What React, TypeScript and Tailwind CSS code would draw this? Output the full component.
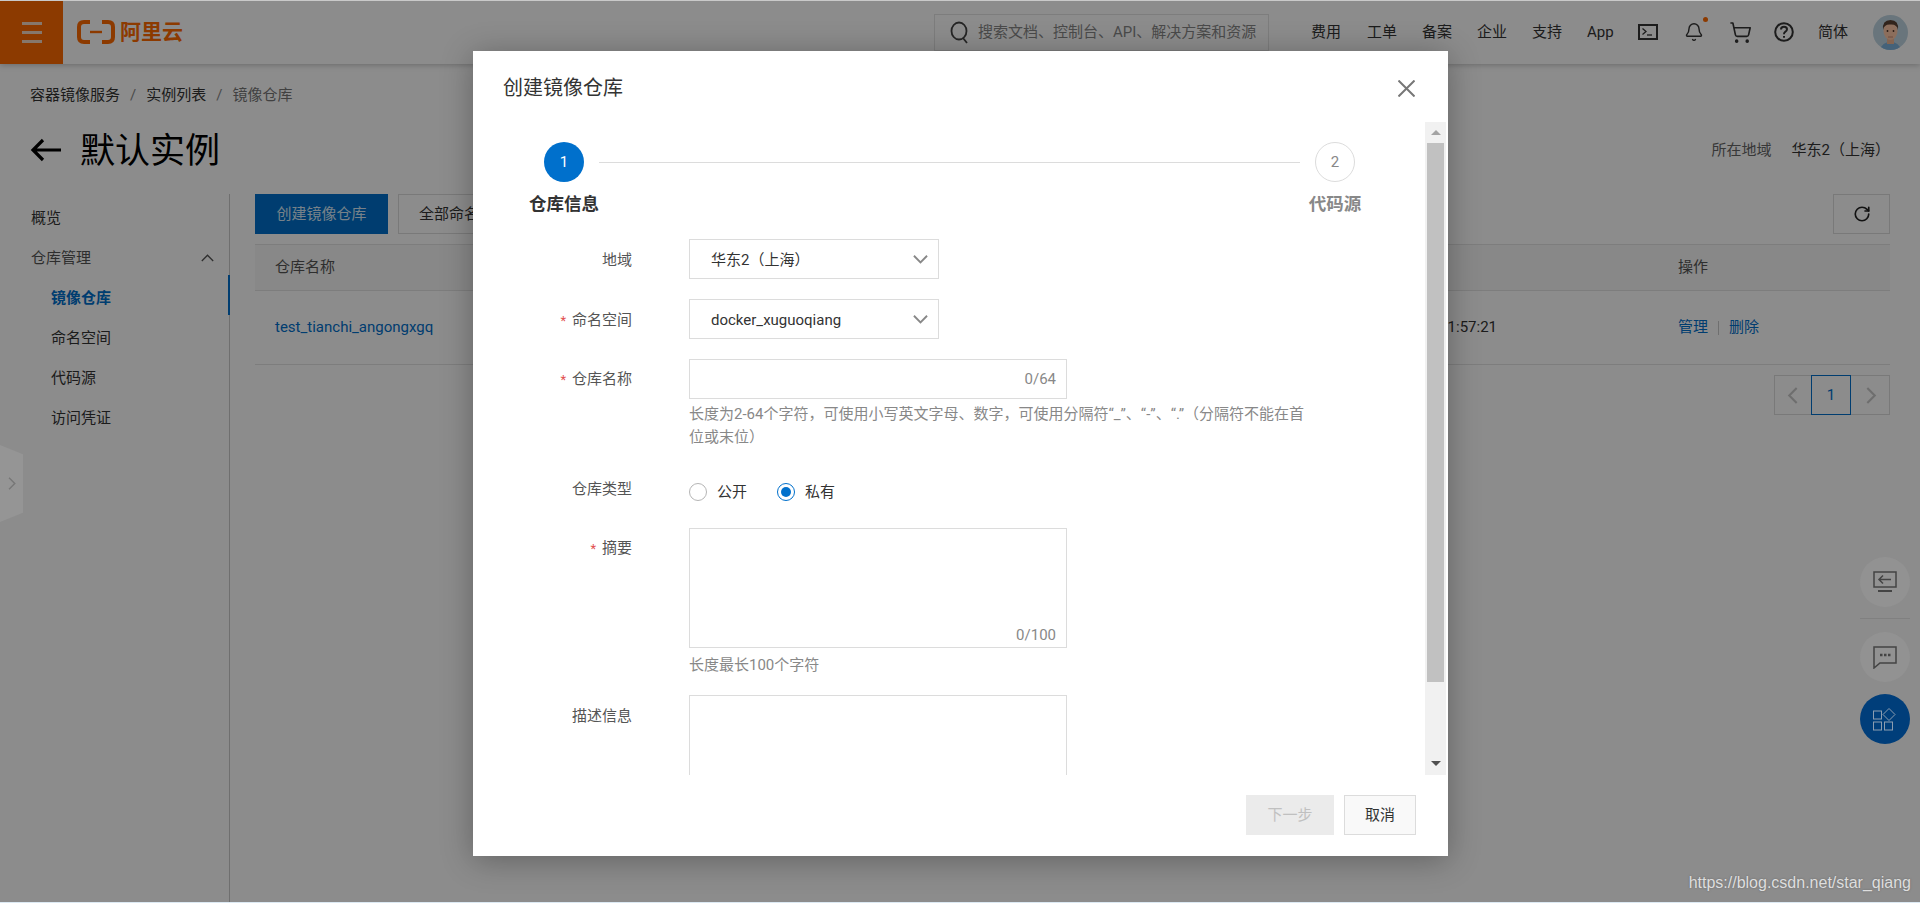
import React from "react";
import { Bell, ShoppingCart, RotateCw } from "lucide-react";

function Chevron({ dir = "down", size = 15, color = "#888", sw = 2 }: { dir?: string; size?: number; color?: string; sw?: number }) {
  const d: Record<string, string> = {
    down: "M1 4 L8 11 L15 4",
    up: "M1 11 L8 4 L15 11",
    left: "M11 1 L4 8 L11 15",
    right: "M5 1 L12 8 L5 15",
  };
  return (
    <svg width={size} height={size} viewBox="0 0 16 16" fill="none" stroke={color} strokeWidth={sw}>
      <path d={d[dir]} />
    </svg>
  );
}

function Label({ text, required, leading }: { text: string; required?: boolean; leading: string }) {
  return (
    <div className={`h-10 w-[159px] shrink-0 text-right text-[15px] text-[#555] ${leading}`}>
      {required && <span className="mr-[6px] text-[13px] text-[#e2504e]">*</span>}
      {text}
    </div>
  );
}

function Select({ value }: { value: string }) {
  return (
    <div className="flex h-10 w-[250px] items-center justify-between border border-[#dcdcdc] bg-white pl-[21px] pr-[10px] text-[15px] text-[#333]">
      <span className="pt-[2px]">{value}</span>
      <Chevron />
    </div>
  );
}

function Header() {
  return (
    <div className="flex h-16 shrink-0 items-center bg-white text-[15px] text-[#333] shadow-[0_1px_6px_rgba(0,0,0,0.25)]">
      <div className="flex h-16 w-[63px] shrink-0 flex-col items-center justify-center gap-[6px] bg-[#ff6a00]">
        <div className="h-[3px] w-5 bg-[#f4d9c4]" />
        <div className="h-[3px] w-5 bg-[#f4d9c4]" />
        <div className="h-[3px] w-5 bg-[#f4d9c4]" />
      </div>
      <div className="ml-[14px] flex items-center gap-[5px] text-[#ff6a00]">
        <svg width="38" height="24" viewBox="0 0 38 24" fill="none" stroke="#ff6a00">
          <path d="M13 2 H7 Q2 2 2 7 V17 Q2 22 7 22 H13" strokeWidth="4" />
          <path d="M25 2 H31 Q36 2 36 7 V17 Q36 22 31 22 H25" strokeWidth="4" />
          <path d="M13 12 H25" strokeWidth="2.4" />
        </svg>
        <span className="text-[21px] font-bold leading-none">阿里云</span>
      </div>
      <div className="ml-auto flex h-[37px] w-[335px] items-center overflow-hidden border border-[#e3e3e3] bg-white pl-[15px] whitespace-nowrap text-[#888]">
        <svg width="20" height="24" viewBox="0 0 20 24" fill="none" stroke="#444" strokeWidth="1.8" className="mr-[8px] shrink-0">
          <ellipse cx="9" cy="11" rx="7.5" ry="8.5" />
          <path d="M13 18 L17 23" />
        </svg>
        搜索文档、控制台、API、解决方案和资源
      </div>
      <div className="ml-[42px] flex items-center">
        <span className="w-[31px] whitespace-nowrap">费用</span>
        <span className="ml-[25px] w-[31px] whitespace-nowrap">工单</span>
        <span className="ml-[24px] w-[31px] whitespace-nowrap">备案</span>
        <span className="ml-[24px] w-[31px] whitespace-nowrap">企业</span>
        <span className="ml-[24px] w-[31px] whitespace-nowrap">支持</span>
        <span className="ml-[24px] w-[28px] whitespace-nowrap">App</span>
        <svg width="20" height="16" viewBox="0 0 20 16" fill="none" stroke="#333" className="ml-[23px]">
          <rect x="1" y="1" width="18" height="14" strokeWidth="2" />
          <path d="M4.5 4.5 L8 7.5 L4.5 10.5" strokeWidth="1.3" />
          <path d="M9 11 H14" strokeWidth="1.3" />
        </svg>
        <div className="relative ml-[26px]">
          <Bell size={20} color="#333" strokeWidth={1.7} />
          <div className="absolute -right-[4px] -top-[5px] h-[5px] w-[5px] rounded-full bg-[#ff6a00]" />
        </div>
        <ShoppingCart size={23} color="#333" strokeWidth={1.7} className="ml-[25px]" />
        <svg width="20" height="20" viewBox="0 0 20 20" fill="none" stroke="#333" strokeWidth="2" className="ml-[22px]">
          <circle cx="10" cy="10" r="8.8" />
          <path d="M7 7.5 Q7 4.8 10 4.8 Q13 4.8 13 7.3 Q13 9 11 10 Q10 10.6 10 12.2" />
          <path d="M10 14 V15.8" />
        </svg>
        <span className="ml-[24px] w-[31px] whitespace-nowrap">简体</span>
        <svg width="35" height="35" viewBox="0 0 35 35" className="ml-[24px] mr-[12px] rounded-full">
          <rect width="35" height="35" fill="#c0d6e2" />
          <path d="M7 35 Q9 27 17.5 27 Q26 27 28 35 Z" fill="#7fb2dc" />
          <rect x="14" y="22" width="7" height="7" fill="#f0b896" />
          <ellipse cx="17.5" cy="16" rx="7" ry="9" fill="#ffc9a8" />
          <path d="M10 15 Q9 5 17.5 5 Q26 5 25 15 Q24 9 17.5 9.5 Q11 9 10 15 Z" fill="#5a4234" />
          <circle cx="14.5" cy="16" r="0.9" fill="#4a3226" />
          <circle cx="20.5" cy="16" r="0.9" fill="#4a3226" />
          <path d="M15 22 H20" stroke="#b97a62" strokeWidth="0.8" />
        </svg>
      </div>
    </div>
  );
}

function Sidebar() {
  const sub = ["命名空间", "代码源", "访问凭证"];
  return (
    <div className="h-full w-[230px] shrink-0 border-r border-[#cacaca] pt-[4px] text-[15px]">
      <div className="flex h-10 items-center pl-[31px] text-[#333]">概览</div>
      <div className="flex h-10 items-center justify-between pl-[31px] pr-[15px] text-[#555]">
        <span>仓库管理</span>
        <Chevron dir="up" size={13} color="#555" sw={1.6} />
      </div>
      <div className="relative flex h-10 items-center pl-[51px] font-bold text-[#0070cc]">
        镜像仓库
        <div className="absolute -right-px -top-[3px] h-10 w-[2px] bg-[#0070cc]" />
      </div>
      {sub.map((s) => (
        <div key={s} className="flex h-10 items-center pl-[51px] text-[#333]">{s}</div>
      ))}
    </div>
  );
}

function Content() {
  return (
    <div className="ml-[25px] w-[1635px] text-[15px]">
      <div className="flex h-10 justify-between">
        <div className="flex gap-[10px]">
          <div className="flex h-10 w-[133px] items-center justify-center bg-[#0070cc] text-[#d9ecfa]">创建镜像仓库</div>
          <div className="flex h-10 w-[170px] items-center border border-[#dcdcdc] pl-[20px] text-[#333]">全部命名空间</div>
        </div>
        <div className="flex h-10 w-[57px] items-center justify-center border border-[#dcdcdc]">
          <RotateCw size={18} color="#222" strokeWidth={2.2} />
        </div>
      </div>
      <div className="mt-[10px] flex h-[47px] items-center border-y border-[#e3e3e3] bg-[#f7f7f7] text-[#555]">
        <span className="flex-1 pl-[20px]">仓库名称</span>
        <span className="w-[212px]">操作</span>
      </div>
      <div className="flex h-[74px] items-center border-b border-[#e3e3e3] text-[#333]">
        <span className="flex-1 pl-[20px] text-[#0070cc]">test_tianchi_angongxgq</span>
        <span className="mr-[181px]">2020-03-21 21:57:21</span>
        <div className="flex w-[212px] items-center text-[#0070cc]">
          <span>管理</span>
          <div className="mx-[10px] h-[14px] w-px bg-[#cacaca]" />
          <span>删除</span>
        </div>
      </div>
      <div className="mt-[10px] flex justify-end">
        <div className="flex h-10 w-[116px] border border-[#dcdcdc]">
          <div className="flex w-[36px] items-center justify-center"><Chevron dir="left" size={17} color="#c9c9c9" /></div>
          <div className="-my-px flex w-10 items-center justify-center border border-[#0070cc] text-[#0070cc]">1</div>
          <div className="flex flex-1 items-center justify-center"><Chevron dir="right" size={17} color="#c9c9c9" /></div>
        </div>
      </div>
    </div>
  );
}

function Modal() {
  return (
    <div className="absolute left-[473px] top-[51px] z-20 flex h-[805px] w-[975px] flex-col bg-white text-[15px] shadow-[0_4px_30px_rgba(0,0,0,0.3)]">
      <div className="flex h-[71px] shrink-0 items-center justify-between pl-[30px] pr-[33px] pt-[3px]">
        <span className="text-[20px] text-[#333]">创建镜像仓库</span>
        <svg width="17" height="17" viewBox="0 0 17 17" stroke="#777" strokeWidth="2" fill="none">
          <path d="M0.5 0.5 L16.5 16.5 M16.5 0.5 L0.5 16.5" />
        </svg>
      </div>
      <div className="flex h-[653px] shrink-0 overflow-hidden">
        <div className="flex-1 pt-[20px]">
          <div className="ml-[56px] flex w-[841px]">
            <div className="flex w-[70px] flex-col items-center">
              <div className="flex h-10 w-10 items-center justify-center rounded-full bg-[#0070cc] text-white">1</div>
              <div className="mt-[10px] whitespace-nowrap text-[17.5px] font-bold leading-[24px] text-[#333]">仓库信息</div>
            </div>
            <div className="mt-[20px] h-px flex-1 bg-[#dcdcdc]" />
            <div className="flex w-[70px] flex-col items-center">
              <div className="flex h-10 w-10 items-center justify-center rounded-full border border-[#dcdcdc] text-[#888]">2</div>
              <div className="mt-[10px] whitespace-nowrap text-[17.5px] font-bold leading-[24px] text-[#888]">代码源</div>
            </div>
          </div>
          <div className="mt-[23px] flex flex-col">
            <div className="flex gap-[57px]">
              <Label text="地域" leading="leading-[42px]" />
              <Select value="华东2（上海）" />
            </div>
            <div className="mt-[20px] flex gap-[57px]">
              <Label text="命名空间" required leading="leading-[42px]" />
              <Select value="docker_xuguoqiang" />
            </div>
            <div className="mt-[20px] flex gap-[57px]">
              <Label text="仓库名称" required leading="leading-[40px]" />
              <div>
                <div className="flex h-10 w-[378px] items-center justify-end border border-[#dcdcdc] pr-[10px] text-[#888]">0/64</div>
                <div className="mt-[4px] w-[640px] text-[15px] leading-[22.5px] text-[#888]">
                  长度为2-64个字符，可使用小写英文字母、数字，可使用分隔符“_”、“-”、“.”（分隔符不能在首
                  <br />
                  位或末位）
                </div>
              </div>
            </div>
            <div className="mt-[24px] flex gap-[57px]">
              <Label text="仓库类型" leading="leading-[34px]" />
              <div className="flex h-10 items-center text-[#333]">
                <div className="h-[18px] w-[18px] rounded-full border border-[#b5b5b5]" />
                <span className="ml-[10px]">公开</span>
                <div className="ml-[30px] flex h-[18px] w-[18px] items-center justify-center rounded-full border border-[#0070cc]">
                  <div className="h-[10px] w-[10px] rounded-full bg-[#0070cc]" />
                </div>
                <span className="ml-[10px]">私有</span>
              </div>
            </div>
            <div className="mt-[16px] flex gap-[57px]">
              <Label text="摘要" required leading="leading-[40px]" />
              <div>
                <div className="flex h-[120px] w-[378px] items-end justify-end border border-[#dcdcdc] pb-[1px] pr-[10px] text-[#888]">0/100</div>
                <div className="mt-[6px] leading-[22.5px] text-[#888]">长度最长100个字符</div>
              </div>
            </div>
            <div className="mt-[18px] flex gap-[57px]">
              <Label text="描述信息" leading="leading-[42px]" />
              <div className="h-[120px] w-[378px] border border-[#dcdcdc]" />
            </div>
          </div>
        </div>
        <div className="mr-[2px] flex w-[21px] shrink-0 flex-col items-center bg-[#f1f1f1]">
          <div className="flex h-[21px] w-full items-center justify-center">
            <div className="h-0 w-0 border-x-[5px] border-b-[5px] border-x-transparent border-b-[#a3a3a3]" />
          </div>
          <div className="h-[539px] w-[17px] bg-[#c1c1c1]" />
          <div className="mt-auto flex h-[24px] w-full items-center justify-center">
            <div className="h-0 w-0 border-x-[5px] border-t-[5px] border-x-transparent border-t-[#505050]" />
          </div>
        </div>
      </div>
      <div className="flex flex-1 items-start justify-end gap-[10px] pr-[32px] pt-[20px]">
        <div className="flex h-10 w-[88px] items-center justify-center bg-[#ebebeb] text-[#c0c0c0]">下一步</div>
        <div className="flex h-10 w-[72px] items-center justify-center border border-[#dcdcdc] bg-[#f9f9f9] text-[#333]">取消</div>
      </div>
    </div>
  );
}

function Floats() {
  return (
    <div className="absolute left-[1860px] top-[557px] z-10 flex w-[50px] flex-col items-center">
      <div className="flex h-[50px] w-[50px] items-center justify-center rounded-full bg-[#929292]">
        <svg width="24" height="22" viewBox="0 0 24 22" fill="none" stroke="#444" strokeWidth="1.5">
          <rect x="1" y="1" width="22" height="15" />
          <path d="M18 8.5 H6 M10 4.5 L6 8.5 L10 12.5" />
          <path d="M5 20 H19" strokeWidth="2" />
        </svg>
      </div>
      <div className="mt-[11px] h-px w-[50px] bg-[#808080]" />
      <div className="mt-[13px] flex h-[50px] w-[50px] items-center justify-center rounded-full bg-[#929292]">
        <svg width="24" height="23" viewBox="0 0 24 23" fill="none" stroke="#444" strokeWidth="1.5">
          <path d="M1 1 H23 V17 H7 L1 22 Z" />
          <path d="M7 9 H9.5 M11 9 H13.5 M15 9 H17.5" strokeWidth="2.4" />
        </svg>
      </div>
      <div className="mt-[12px] flex h-[50px] w-[50px] items-center justify-center rounded-full bg-[#003e7a]">
        <svg width="24" height="24" viewBox="0 0 24 24" fill="none" stroke="#8c9db0" strokeWidth="1">
          <rect x="0.5" y="4" width="8" height="8" />
          <rect x="0.5" y="15" width="8" height="8" />
          <rect x="11.5" y="15" width="8" height="8" />
          <path d="M16 1.5 L22 7.5 L16 13.5 L10 7.5 Z" />
        </svg>
      </div>
    </div>
  );
}

export default function App() {
  return (
    <div className="relative flex h-[903px] w-[1920px] flex-col overflow-hidden bg-white font-['Roboto','Noto_Sans_CJK_SC',sans-serif] [text-spacing-trim:space-all]">
      <Header />
      <div className="flex h-[62px] shrink-0 items-center pl-[30px] text-[15px] text-[#333]">
        <span>容器镜像服务</span>
        <span className="mx-[10px] text-[#888]">/</span>
        <span>实例列表</span>
        <span className="mx-[10px] text-[#888]">/</span>
        <span className="text-[#777]">镜像仓库</span>
      </div>
      <div className="flex h-12 shrink-0 items-center pl-[30px] pr-[30px]">
        <svg width="31" height="24" viewBox="0 0 31 24" fill="none" stroke="#000" strokeWidth="3.2">
          <path d="M31 12 H3 M13 2 L3 12 L13 22" />
        </svg>
        <span className="ml-[19px] mt-[2px] text-[35px] leading-none text-black">默认实例</span>
        <span className="ml-auto text-[15px] text-[#666]">所在地域</span>
        <span className="ml-[20px] text-[15px] text-[#333]">华东2（上海）</span>
      </div>
      <div className="mt-[20px] flex flex-1">
        <Sidebar />
        <Content />
      </div>
      <div className="absolute inset-x-0 bottom-px top-px z-[5] bg-black/45" />
      <div className="absolute left-0 top-[445px] z-10 flex h-[77px] w-[23px] items-center justify-center bg-[#959595] [clip-path:polygon(0_0,100%_12%,100%_88%,0_100%)]">
        <Chevron dir="right" size={13} color="#777" sw={1.8} />
      </div>
      <Floats />
      <div className="absolute right-[9px] top-[873px] z-10 font-['Liberation_Sans',sans-serif] text-[16px] leading-[20px] text-[#dedede] [text-shadow:0_0_2px_#666]">
        https://blog.csdn.net/star_qiang
      </div>
      <Modal />
      <div className="absolute inset-x-0 top-0 z-30 h-px bg-[#c9c9c9]" />
      <div className="absolute inset-x-0 bottom-0 z-30 h-px bg-[#dce9f3]" />
    </div>
  );
}
